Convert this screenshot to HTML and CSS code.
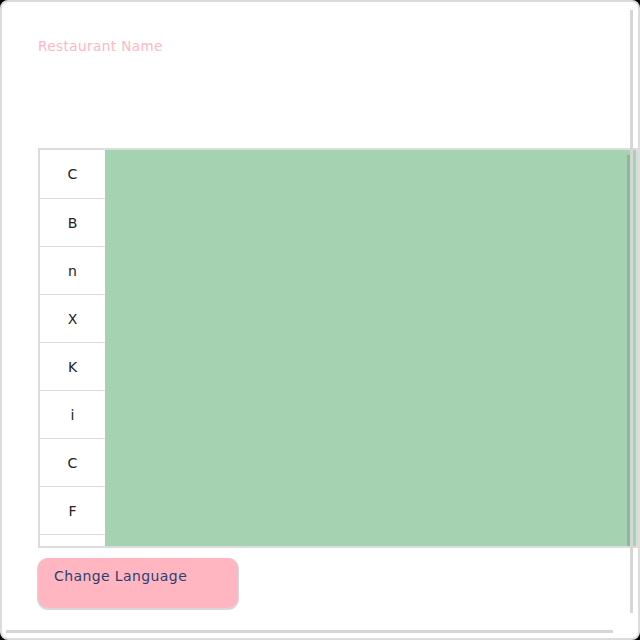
FILE: index.html
```html
<!DOCTYPE html>
<html>
<head>
<meta charset="utf-8">
<link rel="stylesheet" href="styles.css">
</head>
<body>
<div class="card">
  <div class="title">Restaurant Name</div>
  <div class="table">
    <div class="letters">
      <div class="cell">C</div>
      <div class="cell">B</div>
      <div class="cell">n</div>
      <div class="cell">X</div>
      <div class="cell">K</div>
      <div class="cell">i</div>
      <div class="cell">C</div>
      <div class="cell">F</div>
      <div class="cell"></div>
    </div>
    <div class="green"></div>
    <div class="inner-scroll"></div>
  </div>
  <div class="button">Change Language</div>
  <div class="vscroll"></div>
  <div class="hscroll"></div>
</div>
</body>
</html>
```
FILE: styles.css
```css
html { background: #000; }
body { margin: 0; }
.card {
  position: relative;
  width: 640px;
  height: 640px;
  box-sizing: border-box;
  border: 2px solid #dcdcdc;
  border-radius: 8px;
  background: #fff;
  overflow: hidden;
  padding: 36px 0 0 36px;
  font-family: "DejaVu Sans", sans-serif;
}
.title {
  color: #ffb6c1;
  font-size: 13.5px;
  letter-spacing: 0.45px;
  height: 17px;
  line-height: 17px;
}
.table {
  position: relative;
  margin-top: 93px;
  width: 600px;
  height: 400px;
  box-sizing: border-box;
  border: 2px solid #dcdcdc;
  display: flex;
  overflow: hidden;
}
.letters {
  width: 65px;
  flex: none;
  background: #fff;
}
.cell {
  height: 47px;
  border-bottom: 1px solid #dcdcdc;
  display: flex;
  align-items: center;
  justify-content: center;
  font-size: 14px;
  color: #222;
}
.cell:first-child {
  height: 48px;
}
.green {
  flex: 1;
  background: #a5d2b0;
}
.inner-scroll {
  position: absolute;
  left: 587px;
  top: 5px;
  width: 3px;
  height: 392px;
  background: rgba(0,0,0,0.13);
}
.button {
  margin-top: 10px;
  width: 200px;
  height: 50px;
  box-sizing: border-box;
  background: #ffb6c1;
  border-radius: 10px;
  box-shadow: 0 1px 0 1px #d8d8d8;
  padding: 8px 16px;
  color: #2d3f6e;
  font-size: 14px;
  letter-spacing: 0.4px;
  line-height: 20px;
}
.vscroll {
  position: absolute;
  left: 628px;
  top: 8px;
  width: 3px;
  height: 603px;
  background: #d6d6d6;
}
.hscroll {
  position: absolute;
  left: 4px;
  top: 628px;
  width: 607px;
  height: 3px;
  background: #d6d6d6;
}
```
